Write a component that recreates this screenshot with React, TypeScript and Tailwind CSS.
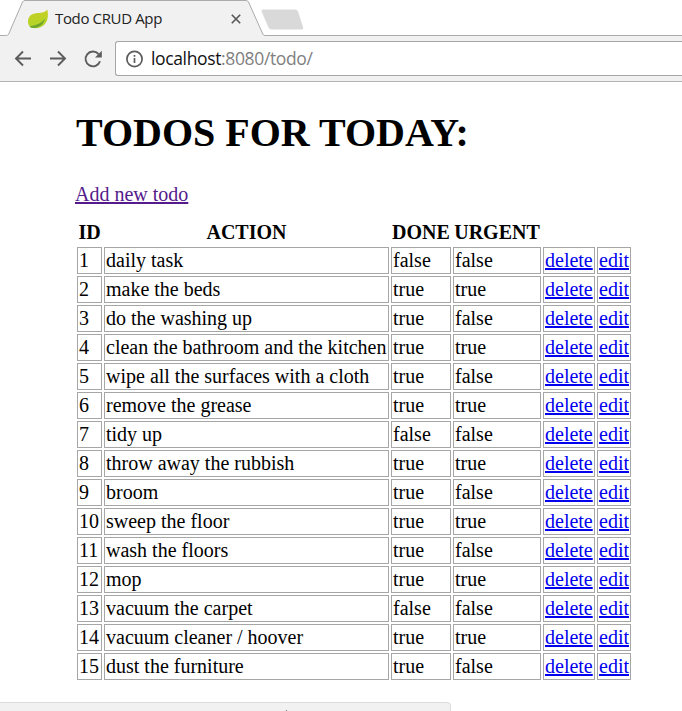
type Todo = { action: string; done: boolean; urgent: boolean };

const todos: Todo[] = [
  { action: "daily task", done: false, urgent: false },
  { action: "make the beds", done: true, urgent: true },
  { action: "do the washing up", done: true, urgent: false },
  { action: "clean the bathroom and the kitchen", done: true, urgent: true },
  { action: "wipe all the surfaces with a cloth", done: true, urgent: false },
  { action: "remove the grease", done: true, urgent: true },
  { action: "tidy up", done: false, urgent: false },
  { action: "throw away the rubbish", done: true, urgent: true },
  { action: "broom", done: true, urgent: false },
  { action: "sweep the floor", done: true, urgent: true },
  { action: "wash the floors", done: true, urgent: false },
  { action: "mop", done: true, urgent: true },
  { action: "vacuum the carpet", done: false, urgent: false },
  { action: "vacuum cleaner / hoover", done: true, urgent: true },
  { action: "dust the furniture", done: true, urgent: false },
];

const cell = "h-[27px] border border-[#a6a6a6] py-0 pl-px pr-0 whitespace-nowrap";
const head = "h-[25px] p-0 text-center font-bold whitespace-nowrap";
const link = "text-[#0000ee] underline decoration-2 underline-offset-[1px] [text-decoration-skip-ink:none]";

function TabStrip() {
  return (
    <div className="relative flex h-9 items-center bg-white pl-7">
      <svg className="absolute inset-0" width="682" height="36" viewBox="0 0 682 36">
        <path
          d="M-1 35.5H6.5Q8 35.5 8.7 34L22.5 2Q23.3 .5 25 .5H246Q247.8 .5 248.5 2L262.8 34Q263.5 35.5 265 35.5H683V37H-1Z"
          fill="#f1f1f1"
          stroke="#ababab"
        />
        <path
          d="M263 9.5H295Q297 9.5 298 11.5L303 27Q303.6 29.5 301.5 29.5H271.5Q269.5 29.5 268.5 27.5L261.6 11.5Q261 9.5 263 9.5Z"
          fill="#d9d9d9"
        />
      </svg>
      <svg className="relative mt-[2px]" width="20" height="20" viewBox="0 0 20 20">
        <defs>
          <linearGradient id="leaf" x1="0" y1="0" x2="0" y2="1">
            <stop offset="0" stopColor="#c8cf22" />
            <stop offset="1" stopColor="#b1d42b" />
          </linearGradient>
        </defs>
        <path
          d="M19.3 .5C17 3.2 14.5 3.8 10 4C4 4.3 0 7 0 12.5C0 15.5 1 17 2.5 18.2C7 20 13 19.3 16.5 15.5C20.5 11 20.3 5.5 19.3 .5Z"
          fill="url(#leaf)"
        />
        <path d="M2 17.2C7.5 16.6 13.5 14.8 17 9.6C15.6 16.2 9.5 20.3 2.5 18.5Z" fill="#6da52f" />
      </svg>
      <span className="relative -mt-px ml-[7px] w-[108px] whitespace-nowrap font-['Open_Sans',sans-serif] text-[15px] leading-5 tracking-[-0.36px] text-[#222]">
        Todo CRUD App
      </span>
      <svg className="relative ml-[68px] mt-[2px]" width="10" height="10" viewBox="0 0 10 10" stroke="#555" strokeWidth="1.6">
        <path d="M.8 .8L9.2 9.2M9.2 .8L.8 9.2" />
      </svg>
    </div>
  );
}

function Toolbar() {
  return (
    <div className="flex h-[46px] items-start border-b border-[#b3b3b3] bg-[#f1f1f1]">
      <svg className="mt-[5px] shrink-0" width="115" height="36" viewBox="0 41 115 36" fill="none" stroke="#5c5c5c" strokeWidth="1.9">
        <path d="M31 58.5H16M23 51.5L16 58.5L23 65.5" />
        <path d="M50 58.5H65M58 51.5L65 58.5L58 65.5" />
        <path d="M98.5 54A7.4 7.4 0 1 0 100 61.3" />
        <path d="M101.8 50.8V57.5H95Z" fill="#5c5c5c" stroke="none" />
      </svg>
      <div className="mt-[5px] flex h-[35px] flex-1 items-center rounded-l-[3px] border border-r-0 border-[#a6a6a6] bg-white pl-[10px]">
        <svg width="18" height="18" viewBox="0 0 18 18" fill="none" stroke="#5c5c5c" strokeWidth="1.7">
          <circle cx="8.5" cy="9" r="7.6" />
          <path d="M8.5 8V13M8.5 5V6.7" />
        </svg>
        <span className="-mt-px ml-[7px] whitespace-nowrap font-['Open_Sans',sans-serif] text-[17.5px] leading-6 tracking-[-0.36px] text-[#111]">
          localhost<span className="text-[#808080]">:8080/todo/</span>
        </span>
      </div>
    </div>
  );
}

export default function App() {
  return (
    <div className="flex h-[711px] w-[682px] flex-col overflow-hidden bg-white font-['Liberation_Serif',serif] text-[20px] leading-[23px] text-black">
      <TabStrip />
      <Toolbar />
      <main className="flex-1 pl-[75px]">
        <h1 className="pl-px pt-[28px] text-[40px] font-bold leading-[46px] whitespace-nowrap">TODOS FOR TODAY:</h1>
        <p className="mt-[27px]">
          <a className="text-[#551a8b] underline decoration-2 underline-offset-[1px] [text-decoration-skip-ink:none]">Add new todo</a>
        </p>
        <table className="mt-[12px] w-[558px] table-fixed border-separate border-spacing-[2px]">
          <colgroup>
            <col className="w-[25px]" />
            <col className="w-[285px]" />
            <col className="w-[60px]" />
            <col className="w-[88px]" />
            <col className="w-[52px]" />
            <col className="w-[34px]" />
          </colgroup>
          <thead>
            <tr>
              <th className={head}>ID</th>
              <th className={head}>ACTION</th>
              <th className={head}>DONE</th>
              <th className={head}>URGENT</th>
            </tr>
          </thead>
          <tbody>
            {todos.map((todo, i) => (
              <tr key={todo.action}>
                <td className={cell}>{i + 1}</td>
                <td className={cell}>{todo.action}</td>
                <td className={cell}>{String(todo.done)}</td>
                <td className={cell}>{String(todo.urgent)}</td>
                <td className={cell}><a className={link}>delete</a></td>
                <td className={cell}><a className={link}>edit</a></td>
              </tr>
            ))}
          </tbody>
        </table>
      </main>
      <footer className="flex h-[9px] w-[451px] justify-end rounded-tr-[4px] border-r border-t border-[#dcdcdc] bg-[#f1f1f1] pr-[163px] pt-[7px]">
        <span className="h-px w-px bg-[#777]" />
      </footer>
    </div>
  );
}
